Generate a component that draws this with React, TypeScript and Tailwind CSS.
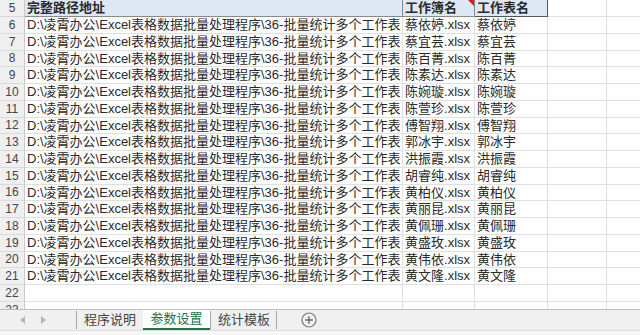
const names = [
  '蔡依婷', '蔡宜芸', '陈百菁', '陈素达', '陈婉璇', '陈萱珍', '傅智翔', '郭冰宇',
  '洪振霞', '胡睿纯', '黄柏仪', '黄丽昆', '黄佩珊', '黄盛玫', '黄伟依', '黄文隆',
]

const path = 'D:\\凌霄办公\\Excel表格数据批量处理程序\\36-批量统计多个工作表'

function RowHead({ n }: { n: number }) {
  return (
    <div className="w-[25px] shrink-0 h-full flex items-center justify-center bg-[#efefef] border-r border-b border-r-[#c9c9c9] border-b-[#dadada] text-[12px] text-[#444]">
      {n}
    </div>
  )
}

function Cell({ w, children }: { w: string; children?: React.ReactNode }) {
  return (
    <div className={`${w} shrink-0 h-full flex items-center px-[2px] overflow-hidden whitespace-nowrap border-r border-b border-[#e0e0e0]`}>
      {children}
    </div>
  )
}

export default function App() {
  return (
    <div className="w-[640px] h-[335px] overflow-hidden bg-white flex flex-col font-['Liberation_Sans','Noto_Sans_CJK_SC',sans-serif] text-[13px] text-[#2a2a2a]">
      <div className="flex-1 overflow-hidden flex flex-col">
        {/* header row 5 */}
        <div className="flex h-[17px] shrink-0">
          <RowHead n={5} />
          <div className="w-[378px] shrink-0 h-full flex items-center px-[2px] bg-[#dde8f4] border-r border-b border-[#8a8a8a] font-bold">
            完整路径地址
          </div>
          <div className="relative w-[72px] shrink-0 h-full flex items-center px-[2px] bg-[#dde8f4] border-r border-b border-[#8a8a8a] font-bold">
            工作簿名
            <svg className="absolute right-0 top-0" width="6" height="6" viewBox="0 0 6 6">
              <polygon points="0,0 6,0 6,6" fill="#e8141a" />
            </svg>
          </div>
          <div className="w-[73px] shrink-0 h-full flex items-center px-[2px] bg-[#dde8f4] border-r border-b border-[#555] font-bold">
            工作表名
          </div>
          <div className="w-[59px] shrink-0 h-full border-r border-b border-[#e0e0e0]" />
          <div className="flex-1 h-full border-b border-[#e0e0e0]" />
        </div>
        {names.map((name, i) => (
          <div key={i} className="flex h-[16.75px] shrink-0">
            <RowHead n={i + 6} />
            <Cell w="w-[378px]">{path}</Cell>
            <Cell w="w-[72px]">{name}.xlsx</Cell>
            <Cell w="w-[73px]">{name}</Cell>
            <Cell w="w-[59px]" />
            <div className="flex-1 h-full border-b border-[#e0e0e0]" />
          </div>
        ))}
        {[22, 23].map((n) => (
          <div key={n} className="flex h-[16.75px] shrink-0">
            <RowHead n={n} />
            <Cell w="w-[378px]" />
            <Cell w="w-[72px]" />
            <Cell w="w-[73px]" />
            <Cell w="w-[59px]" />
            <div className="flex-1 h-full border-b border-[#e0e0e0]" />
          </div>
        ))}
      </div>

      {/* sheet tabs */}
      <div className="h-[26px] shrink-0 flex flex-col border-t border-[#bdbdbd]">
        <div className="h-[20px] flex items-stretch bg-[#f0f0f0] text-[13px] text-[#444] whitespace-nowrap">
          <div className="w-[76px] shrink-0 flex items-center pl-[20px] gap-[16px]">
            <svg width="5" height="8" viewBox="0 0 5 8"><polygon points="5,0 5,8 0,4" fill="#b5b5b5" /></svg>
            <svg width="5" height="8" viewBox="0 0 5 8"><polygon points="0,0 0,8 5,4" fill="#b5b5b5" /></svg>
          </div>
          <div className="shrink-0 flex items-center border-l border-[#a8a8a8] my-[1px] px-[7px] w-[67px]">程序说明</div>
          <div className="shrink-0 flex items-center justify-center w-[67px] bg-white text-[#217346] border-b-2 border-[#217346]">参数设置</div>
          <div className="shrink-0 flex items-center border-l border-[#a8a8a8] my-[1px] px-[7px] w-[66px]">统计模板</div>
          <div className="shrink-0 border-l border-[#a8a8a8] my-[1px]" />
          <div className="shrink-0 flex items-center ml-[24px]">
            <svg width="16" height="16" viewBox="0 0 16 16">
              <circle cx="8" cy="8" r="7" fill="none" stroke="#777" strokeWidth="1.2" />
              <path d="M8 4.2v7.6M4.2 8h7.6" stroke="#666" strokeWidth="1.3" />
            </svg>
          </div>
          <div className="flex-1" />
        </div>
        <div className="flex-1 bg-[#f7f7f7] border-t border-[#dedede]" />
      </div>
    </div>
  )
}
